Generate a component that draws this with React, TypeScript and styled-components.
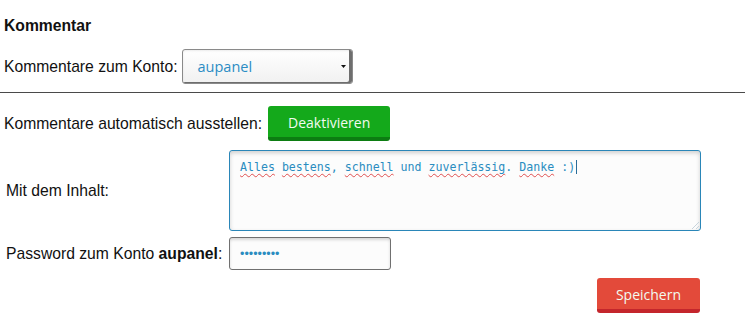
import React from "react";
import styled, { createGlobalStyle } from "styled-components";

const Global = createGlobalStyle`
  html, body { margin: 0; padding: 0; background: #ffffff; }
  body { font-family: "Liberation Sans", Arial, sans-serif; color: #111; }
`;

const Page = styled.div`
  width: 745px;
  padding-top: 17px;
  box-sizing: border-box;
`;

const Section = styled.div`
  padding-left: 4px;
`;

const Heading = styled.h3`
  margin: 0;
  font-size: 15.7px;
  line-height: 18px;
  font-weight: bold;
`;

const Row = styled.div<{ $top: number; $gap: number }>`
  display: flex;
  align-items: center;
  gap: ${(p) => p.$gap}px;
  margin-top: ${(p) => p.$top}px;
`;

const Label = styled.span`
  font-size: 15.7px;
  line-height: 18px;
`;

const FakeSelect = styled.div`
  width: 171px;
  height: 35px;
  box-sizing: border-box;
  border: 1px solid #8a8a8a;
  border-radius: 3px;
  background: linear-gradient(#ffffff, #f1f1f1);
  box-shadow: inset -3px -1px 0 #6e6e6e, inset 0 1px 2px rgba(0,0,0,0.08);
  display: flex;
  align-items: center;
  padding: 0 6px 0 15px;
  font-family: "Open Sans", "Noto Sans", sans-serif;
  font-size: 14.5px;
  color: #2b8cc4;
`;

const SelectText = styled.span`
  flex: 1;
`;

const Divider = styled.hr`
  margin: 8px 0 0 0;
  border: none;
  border-top: 1px solid #4a4a4a;
  height: 0;
`;

const Btn = styled.button<{ $bg: string; $edge: string; $w: number }>`
  width: ${(p) => p.$w}px;
  height: 35px;
  box-sizing: border-box;
  border: none;
  border-bottom: 4px solid ${(p) => p.$edge};
  border-radius: 3px;
  background: ${(p) => p.$bg};
  color: #f2fbf0;
  font-family: "Open Sans", "Noto Sans", sans-serif;
  font-size: 14px;
  padding: 0;
  padding-top: 1px;
  cursor: pointer;
`;

const Form = styled.div`
  display: grid;
  grid-template-columns: 223px 472px;
  padding-left: 6px;
  margin-top: 9px;
  row-gap: 6px;
  align-items: center;
`;

const FakeTextarea = styled.div`
  width: 472px;
  height: 81px;
  box-sizing: border-box;
  border: 1px solid #2a86b8;
  border-radius: 3px;
  background: #fcfcfc;
  box-shadow: inset 0 2px 4px rgba(0,0,0,0.18);
  padding: 9px 10px 7px;
  font-family: "DejaVu Sans Mono", monospace;
  font-size: 11.6px;
  line-height: 15px;
  color: #2a8cc0;
  position: relative;
`;

const Miss = styled.span`
  text-decoration: underline wavy #e05050;
  text-decoration-thickness: 1px;
  text-underline-offset: 2px;
`;

const Caret = styled.span`
  display: inline-block;
  width: 1px;
  height: 14px;
  background: #2a6c98;
  vertical-align: -3px;
  margin-left: 1px;
`;

const Grip = styled.svg`
  position: absolute;
  right: 1px;
  bottom: 1px;
`;

const Password = styled.input`
  width: 162px;
  height: 33px;
  box-sizing: border-box;
  border: 1px solid #707070;
  border-radius: 3px;
  background: #fcfcfc;
  box-shadow: inset 0 2px 3px rgba(0,0,0,0.15);
  padding: 0 10px;
  font-family: "Liberation Sans", Arial, sans-serif;
  font-size: 12.5px;
  color: #2a8cc0;
  outline: none;
`;

const Actions = styled.div`
  grid-column: 1 / span 2;
  display: flex;
  justify-content: flex-end;
  padding-right: 1px;
  margin-top: 2px;
`;

export default function App() {
  return (
    <Page>
      <Global />
      <Section>
        <Heading>Kommentar</Heading>
        <Row $top={14} $gap={4}>
          <Label>Kommentare zum Konto:</Label>
          <FakeSelect role="combobox">
            <SelectText>aupanel</SelectText>
            <svg width="5" height="3" viewBox="0 0 5 3">
              <path d="M0 0H5L2.5 3Z" fill="#111" />
            </svg>
          </FakeSelect>
        </Row>
      </Section>
      <Divider />
      <Section>
        <Row $top={13} $gap={6}>
          <Label>Kommentare automatisch ausstellen:</Label>
          <Btn $bg="#14a91b" $edge="#0c7d12" $w={122}>Deaktivieren</Btn>
        </Row>
      </Section>
      <Form>
        <Label>Mit dem Inhalt:</Label>
        <FakeTextarea role="textbox">
          <Miss>Alles</Miss> <Miss>bestens</Miss>, <Miss>schnell</Miss> und{" "}
          <Miss>zuverlässig</Miss>. <Miss>Danke</Miss> :)
          <Caret />
          <Grip width="8" height="8" viewBox="0 0 8 8">
            <path d="M8 1L1 8M8 5L5 8" stroke="#c8d4dc" strokeWidth="1" />
          </Grip>
        </FakeTextarea>
        <Label>
          Password zum Konto <b>aupanel</b>:
        </Label>
        <Password type="password" defaultValue="aupanel12" readOnly />
        <Actions>
          <Btn $bg="#e34a3a" $edge="#c4262c" $w={103}>Speichern</Btn>
        </Actions>
      </Form>
    </Page>
  );
}
